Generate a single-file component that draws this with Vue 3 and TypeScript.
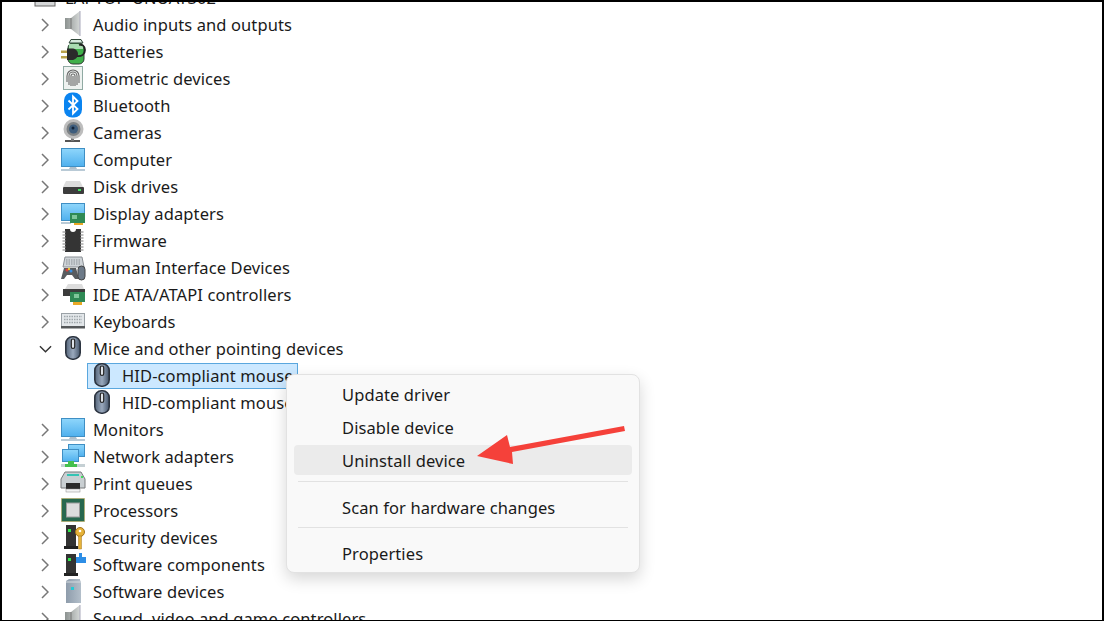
<script setup lang="ts">
interface Row {
  label: string
  icon: string
  kind?: 'root' | 'open' | 'child' | 'selected'
}

const rows: Row[] = [
  { label: 'LAPTOP-UNUAT302', icon: 'root', kind: 'root' },
  { label: 'Audio inputs and outputs', icon: 'audio' },
  { label: 'Batteries', icon: 'battery' },
  { label: 'Biometric devices', icon: 'bio' },
  { label: 'Bluetooth', icon: 'bt' },
  { label: 'Cameras', icon: 'cam' },
  { label: 'Computer', icon: 'monitor' },
  { label: 'Disk drives', icon: 'disk' },
  { label: 'Display adapters', icon: 'display' },
  { label: 'Firmware', icon: 'chip' },
  { label: 'Human Interface Devices', icon: 'hid' },
  { label: 'IDE ATA/ATAPI controllers', icon: 'ide' },
  { label: 'Keyboards', icon: 'kbd' },
  { label: 'Mice and other pointing devices', icon: 'mouse', kind: 'open' },
  { label: 'HID-compliant mouse', icon: 'mouse', kind: 'selected' },
  { label: 'HID-compliant mouse', icon: 'mouse', kind: 'child' },
  { label: 'Monitors', icon: 'monitor' },
  { label: 'Network adapters', icon: 'net' },
  { label: 'Print queues', icon: 'print' },
  { label: 'Processors', icon: 'cpu' },
  { label: 'Security devices', icon: 'sec' },
  { label: 'Software components', icon: 'comp' },
  { label: 'Software devices', icon: 'soft' },
  { label: 'Sound, video and game controllers', icon: 'audio' },
]

const menu: (string | null)[] = [
  'Update driver',
  'Disable device',
  'Uninstall device',
  null,
  'Scan for hardware changes',
  null,
  'Properties',
]
</script>

<template>
  <div class="screen">
    <svg class="defs" aria-hidden="true">
      <defs>
        <linearGradient id="gScreen" x1="0" y1="0" x2="0" y2="1"><stop offset="0" stop-color="#8fd6fb" /><stop offset="1" stop-color="#4fb0ee" /></linearGradient>
        <linearGradient id="gMouse" x1="0" y1="0" x2="1" y2="0"><stop offset="0" stop-color="#55657a" /><stop offset="0.5" stop-color="#9aa9bd" /><stop offset="1" stop-color="#46566b" /></linearGradient>
        <linearGradient id="gSpk" x1="0" y1="0" x2="1" y2="0"><stop offset="0" stop-color="#8c9290" /><stop offset="1" stop-color="#d5d8d7" /></linearGradient>
        <linearGradient id="gTower" x1="0" y1="0" x2="1" y2="0"><stop offset="0" stop-color="#8e9cab" /><stop offset="1" stop-color="#b3bfca" /></linearGradient>
      </defs>
      <symbol id="root" viewBox="0 0 28 28">
        <rect x="3" y="2" width="20" height="20" fill="#d5d7d8" stroke="#666" />
      </symbol>
      <symbol id="audio" viewBox="0 0 28 28">
        <path d="M6 7h6l9-7v25l-9-7H6z" fill="url(#gSpk)" />
        <path d="M12 7v11" stroke="#777" />
        <path d="M21 0v25" stroke="#aab" />
      </symbol>
      <symbol id="battery" viewBox="0 0 28 28">
        <rect x="9" y="5" width="16" height="21" rx="5" fill="#3fb04a" stroke="#2f3b34" />
        <path d="M12 1.500h10l2 3.500H10z" fill="#d5e8dc" stroke="#31483a" />
        <path d="M10 6h14v5H10z" fill="#a9dcb1" />
        <path d="M17 18c6 1 9-2 9-6s-3-6-6-5" fill="none" stroke="#222" stroke-width="1.800" />
        <path d="M8 10.500h5c3 0 6 2 6 5.500s-3 6-6 6H8z" fill="#2b2b2b" />
        <rect x="2" y="12.500" width="6" height="2.500" fill="#b9a24c" /><rect x="2" y="18" width="6" height="2.500" fill="#b9a24c" />
      </symbol>
      <symbol id="bio" viewBox="0 0 28 28">
        <rect x="4.500" y="1.500" width="19" height="23" fill="#eef2f0" stroke="#90aaa3" />
        <g fill="none" stroke="#686868" stroke-width="1.100">
          <path d="M8 17v-6a6 6 0 0 1 12 0v7" /><path d="M10 20v-9a4 4 0 0 1 8 0v9" /><path d="M12 21v-10a2 2 0 0 1 4 0v10" /><path d="M14 11v10" />
        </g>
      </symbol>
      <symbol id="bt" viewBox="0 0 28 28">
        <rect x="5" y="0.500" width="18" height="25" rx="8" fill="#0a84f0" />
        <path d="M9.500 8.500l9 8.500-4.500 4.500V4.500l4.500 4.500-9 8.500" fill="none" stroke="#fff" stroke-width="1.800" />
      </symbol>
      <symbol id="cam" viewBox="0 0 28 28">
        <rect x="6" y="21" width="15" height="2" fill="#555" /><rect x="12" y="16" width="3" height="6" fill="#777" />
        <circle cx="14.500" cy="10" r="10" fill="#bdbdbd" /><circle cx="14.500" cy="10" r="7" fill="#7d8285" /><circle cx="14.500" cy="10" r="4.500" fill="#3e5d7d" /><circle cx="14" cy="9" r="1.500" fill="#12243a" />
      </symbol>
      <symbol id="monitor" viewBox="0 0 28 28">
        <rect x="2.500" y="2.500" width="23" height="18" fill="url(#gScreen)" stroke="#3f8fc4" />
        <path d="M11 21h6l1 2h-8z" fill="#aebfcc" /><rect x="2" y="23" width="24" height="2" fill="#b9cad6" />
      </symbol>
      <symbol id="disk" viewBox="0 0 28 28">
        <path d="M7 8h14l3 6H4z" fill="#dcdcdc" />
        <rect x="4" y="14" width="21" height="7" rx="1" fill="#3c3c3c" />
        <rect x="19" y="16" width="3" height="2" fill="#3fe05f" />
      </symbol>
      <symbol id="display" viewBox="0 0 28 28">
        <rect x="2.500" y="3.500" width="23" height="17" fill="url(#gScreen)" stroke="#3f8fc4" />
        <rect x="2" y="22" width="10" height="2" fill="#b9cad6" />
        <rect x="11" y="13" width="15" height="10" fill="#2f8a55" /><rect x="13" y="15" width="5" height="4" fill="#7fc79a" />
        <rect x="15" y="23" width="9" height="2" fill="#e8a825" />
      </symbol>
      <symbol id="chip" viewBox="0 0 28 28">
        <path d="M6 2h5a3 3 0 0 0 6 0h5v23H6z" fill="#343434" />
        <path d="M3.500 5h3M3.500 8h3M3.500 11h3M3.500 14h3M3.500 17h3M3.500 20h3M3.500 23h3M21.500 5h3M21.500 8h3M21.500 11h3M21.500 14h3M21.500 17h3M21.500 20h3M21.500 23h3" stroke="#a9a9a9" stroke-width="1.500" />
      </symbol>
      <symbol id="hid" viewBox="0 0 28 28">
        <path d="M6 3h17l2 10H4z" fill="#cfd4d8" stroke="#8a8f94" />
        <path d="M7 6h15M7 8h15M7 10h15" stroke="#8a9095" stroke-dasharray="1.500 1" />
        <path d="M5 14h12l3 11h-4l-3-4H8l-3 4H2z" fill="#585c60" />
        <circle cx="8" cy="16" r="1.500" fill="#d8403a" /><circle cx="12" cy="17" r="1.500" fill="#3b8fe0" /><circle cx="10" cy="15" r="1.200" fill="#e8c53a" />
        <rect x="19" y="12" width="7" height="14" rx="3.500" fill="#6d7a88" stroke="#444" />
      </symbol>
      <symbol id="ide" viewBox="0 0 28 28">
        <path d="M9 3h14l2 5H6z" fill="#dddddd" /><rect x="4" y="8" width="22" height="7" fill="#3c3c3c" />
        <rect x="11" y="11" width="15" height="10" fill="#2f8a55" /><rect x="15" y="13" width="5" height="4" fill="#7fc79a" />
        <rect x="14" y="21" width="9" height="3" fill="#e8a825" />
      </symbol>
      <symbol id="kbd" viewBox="0 0 28 28">
        <rect x="2.500" y="5.500" width="23" height="13" fill="#e3e7ea" stroke="#9aa1a6" />
        <path d="M5 8.500h18M5 11.500h18M5 14.500h18" stroke="#9fa6ab" stroke-dasharray="1.500 1" stroke-width="1.300" />
        <rect x="2" y="18" width="24" height="2.500" fill="#55585a" />
      </symbol>
      <symbol id="mouse" viewBox="0 0 28 28">
        <rect x="6.800" y="1.800" width="14.400" height="22.400" rx="6.500" fill="url(#gMouse)" stroke="#2c3440" stroke-width="1.600" />
        <rect x="12.300" y="4" width="3.400" height="9.500" rx="1.700" fill="#dfe4ea" stroke="#222" stroke-width="1.200" />
      </symbol>
      <symbol id="net" viewBox="0 0 28 28">
        <rect x="9.500" y="1.500" width="16" height="12" fill="url(#gScreen)" stroke="#3f8fc4" />
        <rect x="3.500" y="6.500" width="16" height="12" fill="url(#gScreen)" stroke="#3f8fc4" />
        <path d="M2 21h24v3H2z" fill="#c5d0d4" /><path d="M9 18h6v3h3v3H6v-3h3z" fill="#45c04e" />
      </symbol>
      <symbol id="print" viewBox="0 0 28 28">
        <path d="M6 2h16l4 7v9H2V9z" fill="#c9cfd2" stroke="#77797b" />
        <rect x="8" y="4" width="12" height="2" fill="#35c4b4" /><rect x="22" y="6" width="2" height="2" fill="#3fe05f" />
        <rect x="7" y="13" width="14" height="6" fill="#2a2a2a" /><rect x="7" y="19" width="14" height="3" fill="#f4f4f4" stroke="#888" stroke-width="0.500" />
      </symbol>
      <symbol id="cpu" viewBox="0 0 28 28">
        <rect x="2.500" y="1.500" width="23" height="23" fill="#27684e" stroke="#c0a44c" stroke-dasharray="1 1" />
        <rect x="7.500" y="6" width="13" height="14" fill="#dcdcdc" stroke="#9a9a9a" />
      </symbol>
      <symbol id="sec" viewBox="0 0 28 28">
        <path d="M7 1h10v21H7z" fill="#333" /><rect x="5" y="22" width="14" height="3" fill="#222" /><rect x="9" y="5" width="3" height="3" fill="#2fe84a" />
        <circle cx="21" cy="8" r="4.500" fill="#e6b339" stroke="#a5761e" /><circle cx="21" cy="7" r="1.300" fill="#fff" />
        <path d="M19.500 12h3v13h-3z" fill="#e6b339" stroke="#a5761e" stroke-width="0.500" />
      </symbol>
      <symbol id="comp" viewBox="0 0 28 28">
        <path d="M7 3h10v19H7z" fill="#333" /><rect x="5" y="22" width="14" height="3" fill="#222" /><rect x="9" y="7" width="3" height="3" fill="#2fe84a" />
        <path d="M17 6h3V2h3v4h4v6H17z" fill="#2d8ee6" />
      </symbol>
      <symbol id="soft" viewBox="0 0 28 28">
        <path d="M7 3l3-2h11v1l1 2v21H7z" fill="url(#gTower)" /><path d="M7 4h15" stroke="#d5dbe0" />
        <rect x="12" y="9" width="3" height="3" fill="#26c9d4" />
      </symbol>
    </svg>

    <ul class="tree">
      <li v-for="(row, i) in rows" :key="i" class="row" :class="row.kind">
        <span class="twist">
          <svg v-if="!row.kind" class="chev" viewBox="0 0 8 14"><path d="M1 1l6 6-6 6" /></svg>
          <svg v-else-if="row.kind === 'open'" class="chev down" viewBox="0 0 14 8"><path d="M1 1l6 6 6-6" /></svg>
        </span>
        <span class="node">
          <svg class="ico"><use :href="'#' + row.icon" /></svg>
          <span class="label">{{ row.label }}</span>
        </span>
      </li>
    </ul>

    <div class="menu">
      <template v-for="(item, i) in menu" :key="i">
        <div v-if="item" class="item" :class="{ hot: item === 'Uninstall device' }">{{ item }}</div>
        <div v-else class="sep"></div>
      </template>
    </div>

    <svg class="arrow" viewBox="0 0 160 50">
      <path d="M7 31L37 10l3 12L154 1l1 5L42 27l1 12z" fill="#f5413a" />
    </svg>
  </div>
</template>

<style scoped>
.screen {
  position: relative;
  width: 1104px;
  height: 621px;
  box-sizing: border-box;
  overflow: hidden;
  background: #fff;
  border-left: 2px solid #000;
  border-right: 2px solid #000;
  border-top: 2px solid #000;
  border-bottom: 1px solid #000;
  font-family: "Noto Sans", "Open Sans", sans-serif;
  font-size: 16.5px;
  letter-spacing: 0.1px;
  color: #1a1a1a;
}
.defs {
  position: absolute;
  width: 0;
  height: 0;
}
.tree {
  list-style: none;
  margin: -18px 0 0;
  padding: 0 0 0 32px;
}
.row {
  display: flex;
  align-items: center;
  height: 27px;
}
.twist {
  width: 22px;
  display: flex;
  justify-content: center;
  flex: none;
}
.chev {
  width: 8px;
  height: 14px;
  fill: none;
  stroke: #777;
  stroke-width: 1.5;
}
.chev.down {
  width: 13px;
  height: 8px;
  stroke: #333;
}
.node {
  display: flex;
  align-items: center;
  margin-left: 3px;
  gap: 6px;
  white-space: nowrap;
}
.ico {
  width: 28px;
  height: 28px;
  flex: none;
}
.root .node {
  margin-left: -24px;
  gap: 5px;
}
.child .node,
.selected .node {
  margin-left: 31px;
  width: 211px;
  height: 26px;
  box-sizing: border-box;
  border: 1px solid transparent;
}
.selected .node {
  background: #cce8ff;
  border-color: #5aa7de;
}
.menu {
  position: absolute;
  left: 284px;
  top: 372px;
  width: 354px;
  height: 199px;
  box-sizing: border-box;
  padding: 4px 7px;
  background: #f9f9f9;
  border: 1px solid #e2e2e2;
  border-radius: 8px;
  box-shadow: 0 6px 16px rgba(0, 0, 0, 0.16);
  display: flex;
  flex-direction: column;
}
.item {
  flex: none;
  height: 30px;
  line-height: 32px;
  padding-left: 48px;
  border-radius: 4px;
}
.sep + .item {
  line-height: 30px;
}
.item:has(+ .item) {
  margin-bottom: 3px;
}
.item.hot {
  background: #ebebeb;
}
.sep {
  flex: none;
  height: 1px;
  background: #e2e2e2;
  margin: 4px 4px 11px;
}
.hot + .sep {
  margin-top: 6px;
}
.arrow {
  position: absolute;
  left: 468px;
  top: 423px;
  width: 160px;
  height: 50px;
}
</style>
